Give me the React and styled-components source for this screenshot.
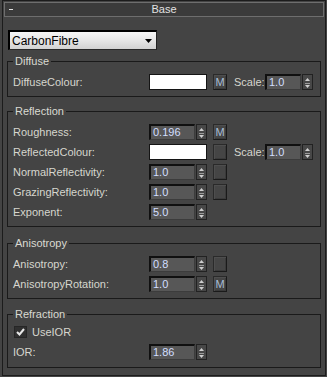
import React from "react";
import styled, { createGlobalStyle } from "styled-components";

const Global = createGlobalStyle`
  html, body { margin: 0; padding: 0; background: #444444; }
  body { font-family: "Liberation Sans", Arial, sans-serif; font-size: 11px; color: #dadad2; }
  * { box-sizing: border-box; }
`;

const Panel = styled.div`
  margin-left: 2px;
  width: 324px;
  height: 376px;
  border: 1px solid #1c1c1c;
  padding: 0 1px;
  background: #444444;
  display: flex;
  flex-direction: column;
`;

const TitleBar = styled.div`
  height: 15px;
  margin: 1px 0 0 0;
  border: 1px solid #6e6e6e;
  background: #3b3b3b;
  position: relative;
  display: flex;
  align-items: center;
  justify-content: center;
  color: #e2e2e2;
  font-size: 11px;
  line-height: 13px;
`;

const Collapse = styled.span`
  position: absolute;
  left: 4px;
  top: 6px;
  width: 4px;
  height: 1px;
  background: #e2e2e2;
`;

const Content = styled.div`
  padding: 0 3px;
  display: flex;
  flex-direction: column;
`;

const Dropdown = styled.div`
  margin: 13px 0 0 1px;
  width: 149px;
  height: 20px;
  border-top: 2px solid #000;
  border-left: 2px solid #000;
  border-right: 1px solid #222;
  border-bottom: 1px solid #2a2a2a;
  background: linear-gradient(#f6f6f6, #e6e6e6 50%, #d2d2d2);
  color: #000;
  font-size: 12px;
  display: flex;
  align-items: center;
  justify-content: space-between;
  padding: 0 4px 0 2px;
`;

const Group = styled.fieldset`
  margin: ${(p) => p.$mt}px 0 0 0;
  padding: ${(p) => p.$pt}px 4px ${(p) => p.$pb}px 5px;
  border: 1px solid #1a1a1a;
  min-width: 0;
`;

const Legend = styled.legend`
  padding: 0 2px;
  font-size: 11px;
  line-height: 13px;
  color: #dadad2;
`;

const Row = styled.div`
  height: 20px;
  display: flex;
  align-items: center;
`;

const Label = styled.span`
  width: 136px;
  flex: none;
  white-space: nowrap;
  color: #d6d6ce;
`;

const Swatch = styled.div`
  width: 58px;
  height: 16px;
  background: #ffffff;
  border: 1px solid #141414;
  flex: none;
`;

const SpinWrap = styled.div`
  display: flex;
  gap: 1px;
  height: 16px;
  flex: none;
  margin-left: ${(p) => p.$ml || 0}px;
`;

const Field = styled.div`
  width: ${(p) => p.$w}px;
  height: 16px;
  border-top: 2px solid #101010;
  border-left: 2px solid #101010;
  border-right: 1px solid #3c3c3c;
  border-bottom: 1px solid #3c3c3c;
  background: #575757;
  color: #d2deff;
  font-size: 11px;
  line-height: 12px;
  padding-left: 2px;
`;

const Arrows = styled.div`
  width: 11px;
  height: 16px;
  background: #474747;
  border: 1px solid #222;
  display: flex;
`;

const MapButton = styled.div`
  width: 14px;
  height: 16px;
  margin-left: 6px;
  flex: none;
  border-top: 1px solid #2a2a2a;
  border-left: 1px solid #2a2a2a;
  border-right: 1px solid #1a1a1a;
  border-bottom: 1px solid #1a1a1a;
  box-shadow: inset 1px 1px 0 #4e4e4e, inset -1px -1px 0 #3a3a3a;
  background: #454545;
  color: #a8bed6;
  font-size: 11px;
  line-height: 14px;
  text-align: center;
`;

const ScaleLabel = styled.span`
  margin-left: 7px;
  width: 31px;
  flex: none;
  color: #d6d6ce;
`;

const Check = styled.div`
  width: 13px;
  height: 12px;
  margin-left: 1px;
  background: #303030;
  border: 1px solid #262626;
  display: flex;
  align-items: center;
  justify-content: center;
`;

const CheckText = styled.span`
  margin-left: 5px;
  color: #d6d6ce;
`;

const SpinArrows = () => (
  <Arrows>
    <svg width="9" height="14" viewBox="0 0 9 14">
      <polygon points="2,6 4.5,3 7,6" fill="#cfcfcf" />
      <rect x="2" y="8" width="5" height="1" fill="#9a9a9a" />
      <polygon points="2,10 7,10 4.5,13" fill="#cfcfcf" />
    </svg>
  </Arrows>
);

const Spinner = ({ value, w = 46, ml }) => (
  <SpinWrap $ml={ml}>
    <Field $w={w}>{value}</Field>
    <SpinArrows />
  </SpinWrap>
);

const Scale = () => (
  <>
    <ScaleLabel>Scale:</ScaleLabel>
    <Spinner value="1.0" w={36} />
  </>
);

export default function App() {
  return (
    <>
      <Global />
      <Panel>
        <TitleBar>
          <Collapse />
          Base
        </TitleBar>
        <Content>
          <Dropdown>
            <span>CarbonFibre</span>
            <svg width="7" height="4" viewBox="0 0 7 4">
              <polygon points="0,0 7,0 3.5,4" fill="#000" />
            </svg>
          </Dropdown>

          <Group $mt={5} $pt={4} $pb={4}>
            <Legend>Diffuse</Legend>
            <Row>
              <Label>DiffuseColour:</Label>
              <Swatch />
              <MapButton>M</MapButton>
              <Scale />
            </Row>
          </Group>

          <Group $mt={8} $pt={4} $pb={4}>
            <Legend>Reflection</Legend>
            <Row>
              <Label>Roughness:</Label>
              <Spinner value="0.196" />
              <MapButton>M</MapButton>
            </Row>
            <Row>
              <Label>ReflectedColour:</Label>
              <Swatch />
              <MapButton />
              <Scale />
            </Row>
            <Row>
              <Label>NormalReflectivity:</Label>
              <Spinner value="1.0" />
              <MapButton />
            </Row>
            <Row>
              <Label>GrazingReflectivity:</Label>
              <Spinner value="1.0" />
              <MapButton />
            </Row>
            <Row>
              <Label>Exponent:</Label>
              <Spinner value="5.0" />
            </Row>
          </Group>

          <Group $mt={10} $pt={4} $pb={4}>
            <Legend>Anisotropy</Legend>
            <Row>
              <Label>Anisotropy:</Label>
              <Spinner value="0.8" />
              <MapButton />
            </Row>
            <Row>
              <Label>AnisotropyRotation:</Label>
              <Spinner value="1.0" />
              <MapButton>M</MapButton>
            </Row>
          </Group>

          <Group $mt={9} $pt={1} $pb={5}>
            <Legend>Refraction</Legend>
            <Row>
              <Check>
                <svg width="9" height="8" viewBox="0 0 9 8">
                  <polyline points="1,4 3.5,6.5 8,1" fill="none" stroke="#e8e8e8" strokeWidth="2" />
                </svg>
              </Check>
              <CheckText>UseIOR</CheckText>
            </Row>
            <Row>
              <Label>IOR:</Label>
              <Spinner value="1.86" />
            </Row>
          </Group>
        </Content>
      </Panel>
    </>
  );
}
